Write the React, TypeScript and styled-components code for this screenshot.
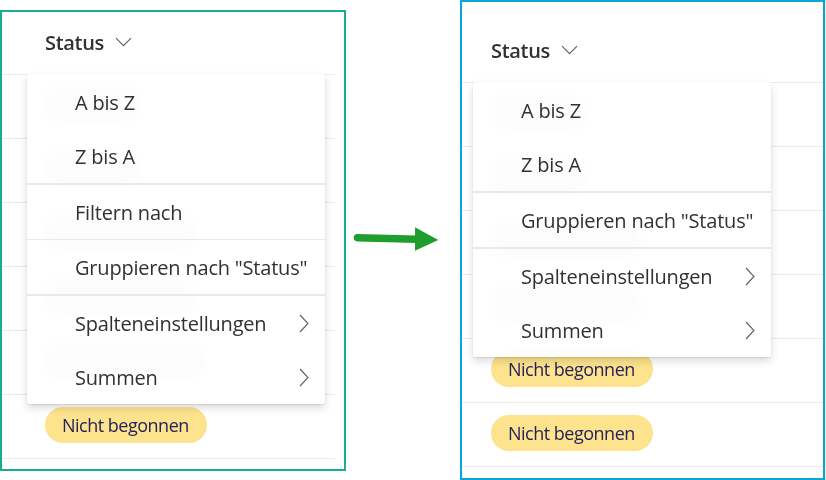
import React from "react";
import styled, { createGlobalStyle } from "styled-components";

const Global = createGlobalStyle`
  html, body { margin: 0; padding: 0; background: #ffffff; }
  body { font-family: "Open Sans", "Noto Sans", sans-serif; color: #323130; }
  * { box-sizing: border-box; }
`;

const Stage = styled.div`
  display: flex;
  align-items: flex-start;
  width: 826px;
  height: 480px;
  overflow: hidden;
`;

const Panel = styled.div<{ $accent: string; $top: number; $width: number; $height: number }>`
  position: relative;
  margin-top: ${(p) => p.$top}px;
  width: ${(p) => p.$width}px;
  height: ${(p) => p.$height}px;
  border: 2px solid ${(p) => p.$accent};
  overflow: hidden;
  background: #fff;
`;

const Header = styled.div<{ $height: number; $padX: number; $inset: number }>`
  display: flex;
  align-items: flex-end;
  gap: 11px;
  height: ${(p) => p.$height}px;
  padding: 0 0 19px ${(p) => p.$padX}px;
  margin-right: ${(p) => p.$inset}px;
  border-bottom: 1px solid #edebe9;
`;

const HeaderLabel = styled.span`
  font-size: 20px;
  font-weight: 600;
  letter-spacing: -0.3px;
  line-height: 24px;
  color: #323130;
`;

const HeaderChevron = styled.svg`
  width: 17px;
  height: 10px;
  margin-bottom: 8px;
`;

const Row = styled.div<{ $padX: number; $inset: number }>`
  display: flex;
  align-items: center;
  height: 64px;
  padding-left: ${(p) => p.$padX}px;
  padding-bottom: 4px;
  margin-right: ${(p) => p.$inset}px;
  border-bottom: 1px solid #edebe9;
`;

const Pill = styled.span<{ $bg: string; $w?: number }>`
  display: inline-flex;
  align-items: center;
  height: 36px;
  width: ${(p) => (p.$w ? `${p.$w}px` : "auto")};
  padding: 0 18px 0 17px;
  border-radius: 18px;
  background: ${(p) => p.$bg};
  color: #25235a;
  font-size: 18px;
  letter-spacing: -0.5px;
  white-space: nowrap;
`;

const Menu = styled.div<{ $left: number; $top: number }>`
  position: absolute;
  left: ${(p) => p.$left}px;
  top: ${(p) => p.$top}px;
  width: 298px;
  padding-top: 1px;
  background: rgba(255, 255, 255, 0.87);
  backdrop-filter: grayscale(1) blur(6px);
  border-radius: 3px;
  box-shadow: 0 4px 9px rgba(0, 0, 0, 0.14), 0 1px 2px rgba(0, 0, 0, 0.1);
`;

const Item = styled.div`
  display: flex;
  align-items: center;
  justify-content: space-between;
  height: 54px;
  padding: 0 16px 0 48px;
  font-size: 20px;
  letter-spacing: -0.2px;
  color: #323130;
  white-space: nowrap;
`;

const Divider = styled.div<{ $thick?: boolean }>`
  height: ${(p) => (p.$thick ? 2 : 1)}px;
  background: #ebe9e7;
`;

const SubChevron = styled.svg`
  width: 10px;
  height: 19px;
`;

const ArrowBox = styled.div`
  display: flex;
  align-items: flex-start;
  width: 114px;
  height: 480px;
  padding-top: 224px;
`;

const Chevron = () => (
  <HeaderChevron viewBox="0 0 17 10">
    <path d="M1 1.2 L8.5 8.7 L16 1.2" fill="none" stroke="#605e5c" strokeWidth="1.1" />
  </HeaderChevron>
);

const Sub = () => (
  <SubChevron viewBox="0 0 10 19">
    <path d="M1 1 L9 9.5 L1 18" fill="none" stroke="#605e5c" strokeWidth="1.1" />
  </SubChevron>
);

type Entry = { label: string; sub?: boolean } | { divider: "thin" | "thick" };

const leftMenu: Entry[] = [
  { label: "A bis Z" },
  { label: "Z bis A" },
  { divider: "thick" },
  { label: "Filtern nach" },
  { divider: "thin" },
  { label: 'Gruppieren nach "Status"' },
  { divider: "thick" },
  { label: "Spalteneinstellungen", sub: true },
  { label: "Summen", sub: true },
];

const rightMenu: Entry[] = [
  { label: "A bis Z" },
  { label: "Z bis A" },
  { divider: "thick" },
  { label: 'Gruppieren nach "Status"' },
  { divider: "thick" },
  { label: "Spalteneinstellungen", sub: true },
  { label: "Summen", sub: true },
];

const YELLOW = "#fde38d";
const rowsData = [
  { label: "Erledigt", bg: "#cfe9cf", w: 95 },
  { label: "Erledigt", bg: "#cfe9cf", w: 95 },
  { label: "In Bearbeitung", bg: "#d5e5f3", w: 150 },
  { label: "In Bearbeitung", bg: "#d5e5f3", w: 150 },
  { label: "Nicht begonnen", bg: YELLOW, w: 161 },
  { label: "Nicht begonnen", bg: YELLOW, w: 161 },
];

const ColumnMenu = ({ entries, left, top }: { entries: Entry[]; left: number; top: number }) => (
  <Menu $left={left} $top={top}>
    {entries.map((e, i) =>
      "divider" in e ? (
        <Divider key={i} $thick={e.divider === "thick"} />
      ) : (
        <Item key={i}>
          <span>{e.label}</span>
          {e.sub && <Sub />}
        </Item>
      )
    )}
  </Menu>
);

const ListPanel = ({
  accent,
  top,
  width,
  height,
  headerHeight,
  padX,
  inset,
  covered,
  entries,
  menuLeft,
  menuTop,
}: {
  accent: string;
  top: number;
  width: number;
  height: number;
  headerHeight: number;
  padX: number;
  inset: number;
  covered: number;
  entries: Entry[];
  menuLeft: number;
  menuTop: number;
}) => (
  <Panel $accent={accent} $top={top} $width={width} $height={height}>
    <Header $height={headerHeight} $padX={padX} $inset={inset}>
      <HeaderLabel>Status</HeaderLabel>
      <Chevron />
    </Header>
    {rowsData.map((r, i) => (
      <Row key={i} $padX={padX} $inset={inset}>
        {i < covered ? (
          <Pill $bg={r.bg} $w={r.w} aria-hidden="true" />
        ) : (
          <Pill $bg={r.bg}>{r.label}</Pill>
        )}
      </Row>
    ))}
    <ColumnMenu entries={entries} left={menuLeft} top={menuTop} />
  </Panel>
);

export default function App() {
  return (
    <>
      <Global />
      <Stage>
        <ListPanel
          accent="#17ad8e"
          top={10}
          width={346}
          height={461}
          headerHeight={63}
          padX={43}
          inset={9}
          covered={5}
          entries={leftMenu}
          menuLeft={25}
          menuTop={62}
        />
        <ArrowBox>
          <svg width="114" height="30" viewBox="0 0 114 30">
            <path d="M11.5 13.7 L71 15.3" stroke="#1f9e2e" strokeWidth="7.5" strokeLinecap="round" fill="none" />
            <polygon points="69,3.3 92.3,16 69,26.7" fill="#1f9e2e" />
          </svg>
        </ArrowBox>
        <ListPanel
          accent="#0aa6d6"
          top={0}
          width={365}
          height={480}
          headerHeight={81}
          padX={29}
          inset={0}
          covered={4}
          entries={rightMenu}
          menuLeft={11}
          menuTop={80}
        />
      </Stage>
    </>
  );
}
